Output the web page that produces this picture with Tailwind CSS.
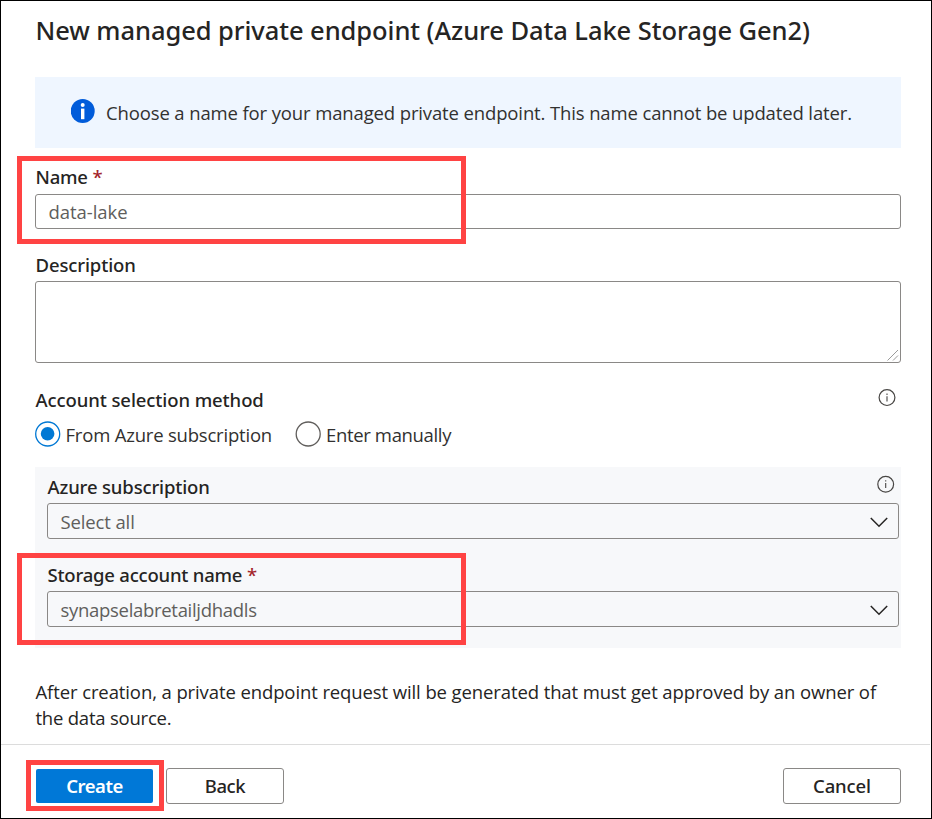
<!DOCTYPE html>
<html lang="en">
<head>
<meta charset="utf-8">
<title>New managed private endpoint</title>
<script src="https://cdn.jsdelivr.net/npm/@tailwindcss/browser@4"></script>
</head>
<body class="bg-white">
<div class="relative flex h-[819px] w-[932px] flex-col overflow-hidden border border-black bg-white font-['Noto_Sans','Open_Sans',sans-serif] text-[18.5px] leading-[26px] text-[#323130]">
  <main class="flex flex-col pt-[11px] pr-[30px] pl-[34px]">
    <h1 class="pl-[0.5px] text-[25.5px] leading-9 font-medium tracking-[-0.065px] whitespace-nowrap text-[#252423]">New managed private endpoint (Azure Data Lake Storage Gen2)</h1>

    <div class="mt-[29px] flex h-[71px] items-center bg-[#eff6ff] pl-9">
      <svg class="-mt-[3px] size-6 shrink-0" viewBox="0 0 24 24">
        <circle cx="11.7" cy="12" r="12" fill="#015cda"/>
        <circle cx="11.7" cy="6" r="2" fill="#fff"/>
        <rect x="10" y="9.6" width="3.4" height="10.6" fill="#fff"/>
      </svg>
      <p class="ml-[11px] pt-px font-['Open_Sans',sans-serif] tracking-[-0.13px] whitespace-nowrap">Choose a name for your managed private endpoint. This name cannot be updated later.</p>
    </div>

    <label class="mt-4 pl-[0.5px] font-medium text-[#252423]"><span class="tracking-[-0.2px]">Name</span> <span class="text-[#a4262c]">*</span></label>
    <div class="mt-1 flex h-[35px] items-center rounded-[3px] border border-[#8a8886] pl-[12.5px] font-['Open_Sans',sans-serif] text-[#605e5c]">
      <span class="tracking-[-0.05px]">data-lake</span>
    </div>

    <label class="mt-[23px] pl-[0.5px] font-medium tracking-[-0.12px] text-[#252423]">Description</label>
    <div class="mt-[3px] flex h-[82px] items-end justify-end rounded-[3px] border border-[#8a8886] p-px">
      <svg class="size-[12px]" viewBox="0 0 12 12" fill="none" stroke="#9a9a9a" stroke-width="1"><path d="M0.5 11.5 11 1M6 11.5 11 6.5"/></svg>
    </div>

    <div class="mt-6 flex justify-between">
      <span class="pl-[0.5px] font-medium tracking-[-0.09px] text-[#252423]">Account selection method</span>
      <svg class="mt-[2px] mr-[5px] size-[18px]" viewBox="0 0 18 18" fill="none" stroke="#484644">
        <circle cx="9" cy="8.6" r="7.9" stroke-width="1.2"/>
        <path d="M9 7.2v5.2M9 4.6v1.3" stroke-width="1.1"/>
      </svg>
    </div>

    <div class="mt-2 flex h-[26px] items-center font-['Open_Sans',sans-serif]">
      <svg class="size-[26px]" viewBox="0 0 26 26"><circle cx="12.7" cy="13" r="12" fill="#fff" stroke="#0078d4" stroke-width="1.3"/><circle cx="12.6" cy="12.8" r="6.8" fill="#0078d4"/></svg>
      <span class="ml-[4.5px] w-[229.5px] pt-px tracking-[-0.2px]">From Azure subscription</span>
      <svg class="size-[26px]" viewBox="0 0 26 26"><circle cx="13.2" cy="13" r="12" fill="#fff" stroke="#605e5c" stroke-width="1.3"/></svg>
      <span class="ml-[5px] pt-px tracking-[-0.35px]">Enter manually</span>
    </div>

    <section class="mt-5 flex h-[181px] flex-col bg-[#f7f8fa] pt-[7px] pr-0.5 pl-3">
      <div class="flex justify-between">
        <span class="pl-[0.5px] font-medium tracking-[-0.15px] text-[#252423]">Azure subscription</span>
        <svg class="mt-[1px] mr-[4px] size-[18px]" viewBox="0 0 18 18" fill="none" stroke="#484644">
          <circle cx="8.7" cy="9.3" r="7.9" stroke-width="1.2"/>
          <path d="M8.7 7.9v5.2M8.7 5.2v1.3" stroke-width="1.1"/>
        </svg>
      </div>
      <div class="mt-[3px] flex h-9 items-center justify-between rounded-[3px] border border-[#8a8886] pr-[10px] pl-[12.5px] font-['Open_Sans',sans-serif] text-[#605e5c]">
        <span class="pt-px tracking-[-0.13px]">Select all</span>
        <svg class="mt-[3px] h-[11px] w-[18px]" viewBox="0 0 18 11" fill="none" stroke="#252423" stroke-width="1.5"><path d="M0.8 1 9 9.3 17.2 1"/></svg>
      </div>

      <label class="mt-[23px] pl-[0.5px] font-medium text-[#252423]"><span class="tracking-[-0.21px]">Storage account name</span> <span class="text-[#a4262c]">*</span></label>
      <div class="mt-[3px] flex h-9 items-center justify-between rounded-[3px] border border-[#8a8886] pr-[10px] pl-[12.5px] font-['Open_Sans',sans-serif] text-[#605e5c]">
        <span class="pt-px tracking-[-0.3px]">synapselabretailjdhadls</span>
        <svg class="mt-[3px] h-[11px] w-[18px]" viewBox="0 0 18 11" fill="none" stroke="#252423" stroke-width="1.5"><path d="M0.8 1 9 9.3 17.2 1"/></svg>
      </div>
    </section>

    <p class="mt-[31px] pl-[0.5px] font-['Open_Sans',sans-serif] tracking-[-0.105px] whitespace-nowrap text-[#252423]">After creation, a private endpoint request will be generated that must get approved by an owner of<br><span class="tracking-[-0.22px]">the data source.</span></p>
  </main>

  <footer class="mt-[13px] mr-px flex border-t border-[#dcdcdc] pt-[23px] pr-[29px] pl-[35px] text-[#252423]">
    <button class="mt-px h-[34px] w-[117px] rounded-[2px] bg-[#0078d7] font-semibold tracking-[-0.45px] text-white">Create</button>
    <button class="ml-[13px] h-9 w-[118px] rounded-[3px] border border-[#8a8886] font-medium tracking-[-0.4px]">Back</button>
    <button class="ml-auto h-9 w-[118px] rounded-[3px] border border-[#8a8886] font-medium tracking-[-0.1px]">Cancel</button>
  </footer>

  <!-- Step highlights drawn over the form -->
  <div class="absolute top-[155px] left-4 h-[88px] w-[449px] border-5 border-[#ff4343]"></div>
  <div class="absolute top-[552px] left-4 h-[92px] w-[449px] border-5 border-[#ff4343]"></div>
  <div class="absolute top-[759px] left-[25px] h-[51px] w-[138px] border-5 border-[#ff4343]"></div>
</div>
</body>
</html>
